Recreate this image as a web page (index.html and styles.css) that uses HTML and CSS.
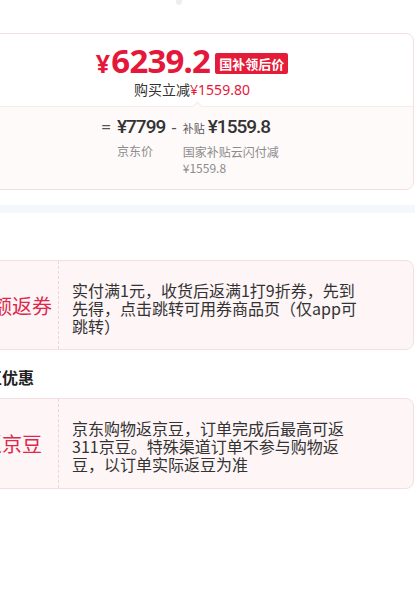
FILE: index.html
```html
<!DOCTYPE html>
<html lang="zh-CN">
<head>
<meta charset="utf-8">
<link rel="stylesheet" href="styles.css">
</head>
<body>
<div class="page">
  <div class="top-mark"></div>
  <section class="price-card">
    <div class="price-top">
      <div class="final-row">
        <span class="final-price"><span class="yen">¥</span>6239.2</span>
        <span class="badge">国补领后价</span>
      </div>
      <div class="save-row">购买立减<span class="red">¥1559.80</span></div>
    </div>
    <div class="price-bottom">
      <span class="caret"></span>
      <div class="formula">
        <div class="op">=</div>
        <div class="term">
          <div class="amount">¥7799</div>
          <div class="label">京东价</div>
        </div>
        <div class="op">-</div>
        <div class="term">
          <div class="amount"><span class="tag">补贴</span>¥1559.8</div>
          <div class="label narrow">国家补贴云闪付减¥1559.8</div>
        </div>
      </div>
    </div>
  </section>
  <div class="band"></div>
  <div class="coupon first">
    <div class="coupon-name">满额返券</div>
    <div class="coupon-desc">实付满1元，收货后返满1打9折券，先到先得，点击跳转可用券商品页（仅app可跳转）</div>
  </div>
  <h3 class="section-title">京豆优惠</h3>
  <div class="coupon">
    <div class="coupon-name">返京豆</div>
    <div class="coupon-desc">京东购物返京豆，订单完成后最高可返311京豆。特殊渠道订单不参与购物返豆，以订单实际返豆为准</div>
  </div>
</div>
</body>
</html>
```

FILE: styles.css
```css
* { box-sizing: border-box; }
html, body { margin: 0; padding: 0; background: #fff; }
body {
  width: 415px;
  height: 606px;
  overflow: hidden;
  font-family: "Noto Sans CJK SC", "Noto Sans", sans-serif;
  color: #333;
}
.page {
  margin-left: -30px;
  width: 444px;
  display: flex;
  flex-direction: column;
}
.top-mark {
  margin-left: 206px;
  width: 6px;
  height: 5px;
  border-radius: 0 0 3px 3px;
  background: #eeeeee;
}
.price-card {
  margin-top: 28px;
  border: 1px solid #f6dfe3;
  border-radius: 8px;
  background: #fff;
}
.price-top {
  height: 72px;
  display: flex;
  flex-direction: column;
  align-items: center;
  padding-top: 11px;
}
.final-row {
  display: flex;
  align-items: center;
  height: 33px;
}
.final-price {
  font-family: "Noto Sans", Roboto, sans-serif;
  font-weight: 700;
  font-size: 33px;
  line-height: 33px;
  color: #e5173a;
  letter-spacing: -0.8px;
}
.yen { font-size: 25px; margin-right: 2px; }
.badge {
  margin-left: 5px;
  margin-top: 3px;
  background: #e41c37;
  color: #fff;
  font-weight: 700;
  font-size: 13px;
  line-height: 21px;
  padding: 0 4px;
  border-radius: 2px;
}
.save-row {
  margin-top: 2px;
  font-size: 14px;
  line-height: 18px;
  color: #333;
}
.red { color: #e5173a; font-family: "Noto Sans", sans-serif; }
.price-bottom {
  position: relative;
  height: 83px;
  border-top: 1px solid #f7ebed;
  background: #fefafa;
  border-radius: 0 0 8px 8px;
  display: flex;
  justify-content: center;
  padding-top: 7px;
}
.caret {
  position: absolute;
  top: -4px;
  left: 223px;
  width: 7px;
  height: 7px;
  background: #fefafa;
  border-left: 1px solid #f7ebed;
  border-top: 1px solid #f7ebed;
  transform: rotate(45deg);
}
.formula {
  display: flex;
  align-items: flex-start;
  gap: 6px;
}
.op {
  font-family: "Noto Sans", sans-serif;
  font-size: 17px;
  line-height: 26px;
  color: #555;
}
.term { display: flex; flex-direction: column; }
.amount {
  font-family: Roboto, "Noto Sans", sans-serif;
  font-weight: 500;
  font-size: 19px;
  line-height: 26px;
  color: #333;
  letter-spacing: -1px;
}
.tag {
  font-family: "Noto Sans CJK SC", sans-serif;
  font-size: 11px;
  font-weight: 400;
  color: #555;
  letter-spacing: 0;
  margin-right: 3px;
}
.label {
  font-size: 12px;
  line-height: 16px;
  color: #8c8c8c;
  margin-top: 3px;
}
.label.narrow { width: 100px; }
.band {
  margin-top: 15px;
  margin-left: 30px;
  width: 415px;
  height: 8px;
  background: #f4f7fb;
}
.coupon {
  display: flex;
  min-height: 91px;
  border: 1px solid #f4e0e4;
  border-radius: 8px;
  background: #fdf5f6;
}
.coupon.first { margin-top: 47px; min-height: 90px; }
.coupon-name {
  width: 88px;
  flex: none;
  display: flex;
  align-items: center;
  justify-content: center;
  padding-right: 5px;
  font-size: 20px;
  color: #e0284c;
  white-space: nowrap;
  border-right: 1px dashed #efd3d9;
}
.coupon-desc {
  width: 302px;
  padding: 20px 0 12px 13px;
  font-size: 16px;
  line-height: 18px;
  color: #333;
}
.section-title {
  margin: 17px 0 11px 0;
  font-size: 16px;
  line-height: 20px;
  font-weight: 700;
  color: #222;
}
```
